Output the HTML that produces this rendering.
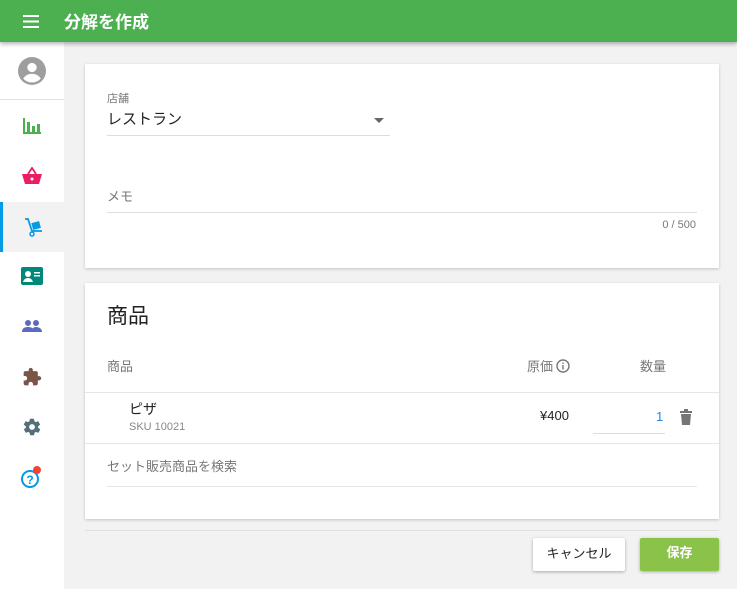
<!DOCTYPE html>
<html><head><meta charset="utf-8"><style>
*{box-sizing:border-box;margin:0;padding:0}
body{width:737px;height:589px;overflow:hidden;background:#f2f2f2;font-family:"Liberation Sans","Noto Sans CJK JP",sans-serif;position:relative}
.hdr{position:absolute;left:0;top:0;width:737px;height:42px;background:#4caf50;box-shadow:0 2px 4px rgba(0,0,0,.3);z-index:2}
.hdr .t{position:absolute;left:64px;top:8px;color:#fff;font-size:17px;font-weight:bold}
.side{position:absolute;left:0;top:42px;width:64px;height:547px;background:#fff}
.it{position:absolute;left:0;width:64px;height:50px;display:flex;align-items:center;justify-content:center}
.card{position:absolute;left:85px;width:634px;background:#fff;box-shadow:0 1px 3px rgba(0,0,0,.2)}
.abs{position:absolute}
.lbl{color:#777;font-size:13px}
.line{position:absolute;height:1px;background:#ddd}
</style></head><body>
<div class="hdr">
<svg class="abs" style="left:23px;top:15px" width="16" height="13"><rect y="0" width="16" height="2" fill="#fff"/><rect y="5.5" width="16" height="2" fill="#fff"/><rect y="11" width="16" height="2" fill="#fff"/></svg>
<div class="t">分解を作成</div></div>
<div class="side">
<svg class="abs" style="left:18px;top:15px" width="28" height="28" viewBox="0 0 24 24"><circle cx="12" cy="12" r="12" fill="#9e9e9e"/><circle cx="12" cy="9" r="4" fill="#fff"/><path d="M4.5 18.5c2-3 4.5-4 7.5-4s5.5 1 7.5 4c-2 2.2-4.6 3.3-7.5 3.3s-5.5-1.1-7.5-3.3z" fill="#fff"/></svg>
<div class="line" style="left:0;top:57px;width:64px;background:#e0e0e0"></div>
<div class="it" style="top:59px"><svg width="18" height="16"><rect x="0" y="0" width="2" height="16" fill="#4caf50"/><rect x="0" y="14" width="18" height="2" fill="#4caf50"/><rect x="4" y="4" width="3" height="11" fill="#4caf50"/><rect x="9" y="8" width="3" height="7" fill="#4caf50"/><rect x="14" y="6" width="3" height="9" fill="#4caf50"/></svg></div>
<div class="it" style="top:109px"><svg width="20" height="18" viewBox="0 0 20 18"><path d="M6 7l4-6 4 6" stroke="#e91e63" stroke-width="1.8" fill="none"/><path d="M0 7h20l-3 10H3z" fill="#e91e63"/><circle cx="10" cy="12" r="1.5" fill="#fff"/></svg></div>
<div class="it" style="top:160px;background:#f2f2f2;border-left:3px solid #039be5"><svg width="20" height="20" viewBox="0 0 20 20"><path d="M1 2h3l4 12h10" stroke="#039be5" stroke-width="1.8" fill="none"/><rect x="8" y="5" width="8" height="7" fill="#039be5" transform="rotate(-15 12 8)"/><circle cx="8" cy="17" r="2" fill="none" stroke="#039be5" stroke-width="1.5"/></svg></div>
<div class="it" style="top:209px"><svg width="22" height="18"><rect width="22" height="18" rx="2" fill="#00897b"/><circle cx="7" cy="7" r="3" fill="#fff"/><path d="M2 15c1-3 3-4 5-4s4 1 5 4z" fill="#fff"/><rect x="13" y="5" width="6" height="1.5" fill="#fff"/><rect x="13" y="8" width="6" height="1.5" fill="#fff"/></svg></div>
<div class="it" style="top:259px"><svg width="20" height="12"><circle cx="6" cy="3" r="3" fill="#5c6bc0"/><circle cx="14" cy="3" r="3" fill="#5c6bc0"/><path d="M0 12c0-4 3-5 6-5s6 1 6 5zM9 12c1-4 3-5 5-5s6 1 6 5z" fill="#5c6bc0"/></svg></div>
<div class="it" style="top:310px"><svg width="20" height="20" viewBox="0 0 24 24"><path d="M20.5 11H19V7c0-1.1-.9-2-2-2h-4V3.5a2.5 2.5 0 0 0-5 0V5H4c-1.1 0-2 .9-2 2v3.8h1.5c1.5 0 2.7 1.2 2.7 2.7S5 16.2 3.5 16.2H2V20c0 1.1.9 2 2 2h3.8v-1.5c0-1.500 1.2-2.7 2.7-2.7s2.7 1.2 2.7 2.7V22H17c1.1 0 2-.9 2-2v-4h1.5a2.5 2.5 0 0 0 0-5z" fill="#795548"/></svg></div>
<div class="it" style="top:360px"><svg width="20" height="20" viewBox="0 0 24 24"><path d="M19.4 13c.04-.3.06-.6.06-1s-.02-.7-.06-1l2.1-1.6c.2-.15.25-.4.1-.6l-2-3.5c-.1-.2-.4-.3-.6-.2l-2.5 1c-.5-.4-1.1-.7-1.7-1l-.4-2.6c0-.2-.2-.4-.5-.4h-4c-.25 0-.45.2-.5.4l-.4 2.6c-.6.25-1.2.6-1.700 1l-2.5-1c-.2-.1-.5 0-.6.2l-2 3.5c-.1.2-.05.45.1.6L4.6 11c-.04.3-.06.65-.06 1s.02.7.06 1l-2.1 1.6c-.2.15-.25.4-.1.6l2 3.5c.1.2.4.3.6.2l2.5-1c.5.4 1.1.7 1.7 1l.4 2.6c.05.2.25.4.5.4h4c.25 0 .45-.2.5-.4l.4-2.6c.6-.25 1.2-.6 1.7-1l2.5 1c.2.1.5 0 .6-.2l2-3.5c.1-.2.05-.45-.1-.6zM12 15.5a3.5 3.5 0 1 1 0-7 3.5 3.5 0 0 1 0 7z" fill="#546e7a"/></svg></div>
<div class="it" style="top:410px"><svg width="24" height="24" viewBox="0 0 24 24"><circle cx="10" cy="14" r="8" fill="none" stroke="#039be5" stroke-width="2"/><text x="10" y="19" font-size="12" font-weight="bold" fill="#039be5" text-anchor="middle" font-family="Liberation Sans">?</text><circle cx="17" cy="5" r="4" fill="#f44336"/></svg></div>
</div>
<div class="card" style="top:64px;height:204px">
<div class="abs lbl" style="left:22px;top:26px;font-size:11px">店舗</div>
<div class="abs" style="left:22px;top:44px;font-size:15px;color:#222">レストラン</div>
<svg class="abs" style="left:289px;top:54px" width="10" height="5"><path d="M0 0h10L5 5z" fill="#666"/></svg>
<div class="line" style="left:22px;top:71px;width:283px"></div>
<div class="abs lbl" style="left:22px;top:122px">メモ</div>
<div class="line" style="left:22px;top:148px;width:590px"></div>
<div class="abs" style="right:23px;top:155px;font-size:11px;color:#777">0 / 500</div>
</div>
<div class="card" style="top:283px;height:236px">
<div class="abs" style="left:22px;top:17px;font-size:21px;color:#222">商品</div>
<div class="abs lbl" style="left:22px;top:73px">商品</div>
<div class="abs lbl" style="left:442px;top:73px">原価</div>
<svg class="abs" style="left:471px;top:76px" width="14" height="14"><circle cx="7" cy="7" r="6" fill="none" stroke="#777" stroke-width="1.4"/><rect x="6.3" y="6" width="1.4" height="4.5" fill="#777"/><rect x="6.3" y="3.5" width="1.4" height="1.4" fill="#777"/></svg>
<div class="abs lbl" style="left:555px;top:73px">数量</div>
<div class="line" style="left:0;top:109px;width:634px;background:#e6e6e6"></div>
<div class="abs" style="left:44px;top:116px;font-size:14px;color:#222">ピザ</div>
<div class="abs" style="left:44px;top:138px;font-size:11px;color:#888">SKU 10021</div>
<div class="abs" style="left:455px;top:125px;font-size:13px;color:#222">¥400</div>
<div class="abs" style="left:571px;top:126px;font-size:13px;color:#1e88e5">1</div>
<div class="line" style="left:508px;top:150px;width:72px"></div>
<svg class="abs" style="left:595px;top:126px" width="12" height="16"><rect x="0" y="2" width="12" height="2" fill="#757575"/><rect x="4" y="0" width="4" height="2" fill="#757575"/><path d="M1 5h10l-1 11H2z" fill="#757575"/></svg>
<div class="line" style="left:0;top:160px;width:634px;background:#e6e6e6"></div>
<div class="abs lbl" style="left:22px;top:173px">セット販売商品を検索</div>
<div class="line" style="left:22px;top:203px;width:590px;background:#e6e6e6"></div>
</div>
<div class="line" style="left:85px;top:530px;width:634px;background:#e0e0e0"></div>
<div class="abs" style="left:533px;top:538px;width:92px;height:33px;background:#fff;box-shadow:0 1px 3px rgba(0,0,0,.3);border-radius:2px;font-size:13px;color:#222;text-align:center;line-height:31px">キャンセル</div>
<div class="abs" style="left:640px;top:538px;width:79px;height:33px;background:#8bc34a;box-shadow:0 1px 3px rgba(0,0,0,.3);border-radius:2px;font-size:13px;color:#fff;font-weight:bold;text-align:center;line-height:29px">保存</div>
</body></html>
